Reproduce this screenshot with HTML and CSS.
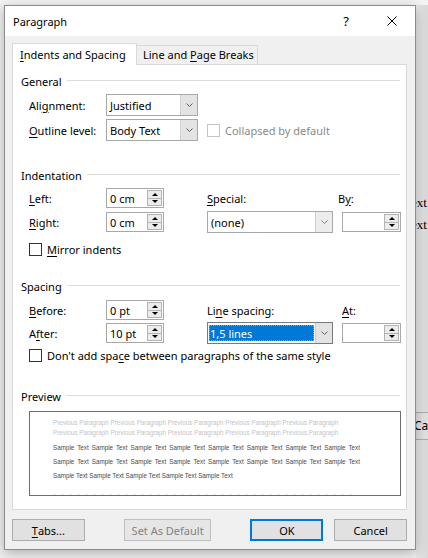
FILE: index.html
```html
<!DOCTYPE html>
<html>
<head>
<meta charset="utf-8">
<title>Paragraph</title>
<link rel="stylesheet" href="styles.css">
</head>
<body>
<div class="desk">
  <div class="doc-frag f1">Text</div>
  <div class="doc-frag f2">Text</div>
  <div class="back-btn">Car</div>
</div>
<div class="dialog">
  <div class="titlebar">
    <span class="title">Paragraph</span>
    <span class="tbtn help">?</span>
    <span class="tbtn close"><svg width="10" height="10" viewBox="0 0 10 10"><path d="M0.5 0.5L9.5 9.5M9.5 0.5L0.5 9.5" stroke="#000" stroke-width="1" fill="none"/></svg></span>
  </div>
  <div class="main">
    <div class="tabs">
      <div class="tab active"><u>I</u>ndents and Spacing</div>
      <div class="tab">Line and <u>P</u>age Breaks</div>
    </div>
    <div class="panel">
      <div class="ghead">General</div>
      <div class="rows">
        <div class="r r-align">
          <span>Ali<u>g</u>nment:</span>
          <div class="combo c92"><span class="v">Justified</span><span class="arr"><svg width="7" height="4" viewBox="0 0 7 4"><path d="M0.5 0.5L3.5 3.5L6.5 0.5" stroke="#606060" fill="none"/></svg></span></div>
        </div>
        <div class="r r-outline">
          <span><u>O</u>utline level:</span>
          <div class="combo c92"><span class="v">Body Text</span><span class="arr"><svg width="7" height="4" viewBox="0 0 7 4"><path d="M0.5 0.5L3.5 3.5L6.5 0.5" stroke="#606060" fill="none"/></svg></span></div>
          <div class="chk dis span2"><span class="cb"></span><span>Collapsed by default</span></div>
        </div>
      </div>

      <div class="ghead g-ind">Indentation</div>
      <div class="rows">
        <div class="r r1 r-left">
          <span><u>L</u>eft:</span>
          <div class="spin"><span class="v">0 cm</span><span class="sb"><span class="up"></span><span class="dn"></span></span></div>
          <span><u>S</u>pecial:</span>
          <span>B<u>y</u>:</span>
        </div>
        <div class="r r2">
          <span><u>R</u>ight:</span>
          <div class="spin"><span class="v">0 cm</span><span class="sb"><span class="up"></span><span class="dn"></span></span></div>
          <div class="combo c126"><span class="v">(none)</span><span class="arr lite"><svg width="7" height="4" viewBox="0 0 7 4"><path d="M0.5 0.5L3.5 3.5L6.5 0.5" stroke="#808080" fill="none"/></svg></span></div>
          <div class="spin s59"><span class="v"></span><span class="sb"><span class="up"></span><span class="dn"></span></span></div>
        </div>
        <div class="r r-chk r-mirror">
          <div class="chk all"><span class="cb"></span><span><u>M</u>irror indents</span></div>
        </div>
      </div>

      <div class="ghead g-sp">Spacing</div>
      <div class="rows">
        <div class="r r1 r-before">
          <span><u>B</u>efore:</span>
          <div class="spin"><span class="v">0 pt</span><span class="sb"><span class="up"></span><span class="dn"></span></span></div>
          <span>Li<u>n</u>e spacing:</span>
          <span class="at"><u>A</u>t:</span>
        </div>
        <div class="r r2 r-after">
          <span>A<u>f</u>ter:</span>
          <div class="spin"><span class="v">10 pt</span><span class="sb"><span class="up"></span><span class="dn"></span></span></div>
          <div class="combo c126 focus"><span class="v"><span class="hl">1,5 lines</span></span><span class="arr"><svg width="7" height="4" viewBox="0 0 7 4"><path d="M0.5 0.5L3.5 3.5L6.5 0.5" stroke="#606060" fill="none"/></svg></span></div>
          <div class="spin s59"><span class="v"></span><span class="sb"><span class="up"></span><span class="dn"></span></span></div>
        </div>
        <div class="r r-chk r-dont">
          <div class="chk all"><span class="cb"></span><span>Don't add spa<u>c</u>e between paragraphs of the same style</span></div>
        </div>
      </div>

      <div class="ghead g-prev">Preview</div>
      <div class="rows">
        <div class="preview">
          <div class="pline">Previous Paragraph Previous Paragraph Previous Paragraph Previous Paragraph Previous Paragraph</div>
          <div class="pline">Previous Paragraph Previous Paragraph Previous Paragraph Previous Paragraph Previous Paragraph</div>
          <div class="sline first">Sample Text Sample Text Sample Text Sample Text Sample Text Sample Text Sample Text Sample Text</div>
          <div class="sline">Sample Text Sample Text Sample Text Sample Text Sample Text Sample Text Sample Text Sample Text</div>
          <div class="sline last">Sample Text Sample Text Sample Text Sample Text Sample Text</div>
          <div class="fline"></div>
        </div>
      </div>
    </div>
    <div class="btns">
      <div class="btn b-tabs"><u>T</u>abs...</div>
      <div class="btn b-def disabled">Set As Default</div>
      <div class="btn b-ok">OK</div>
      <div class="btn b-cancel">Cancel</div>
    </div>
  </div>
</div>
</body>
</html>
```

FILE: styles.css
```css
* { box-sizing: border-box; }
html, body { margin: 0; padding: 0; }
body {
  width: 428px;
  height: 558px;
  overflow: hidden;
  position: relative;
  background: #ececec;
  font-family: "Noto Sans", "Open Sans", sans-serif;
  font-size: 11px;
  color: #000;
}
u { text-decoration: underline; text-underline-offset: 2px; }

/* background window (desktop) */
.desk {
  position: absolute;
  inset: 0;
  background:
    linear-gradient(#f4f4f4, #f4f4f4) 0 0 / 100% 5px no-repeat,
    linear-gradient(to right, #e9e9e9, #d9d9d9) 416px 0 / 12px 100% no-repeat,
    #f0f0f0;
}
.doc-frag {
  position: absolute;
  left: 404px;
  font-family: "Liberation Serif", serif;
  font-size: 13px;
  color: #000;
}
.f1 { top: 195px; }
.f2 { top: 217px; }
.back-btn {
  position: absolute;
  left: 400px;
  top: 412px;
  width: 28px;
  height: 28px;
  border: 1px solid #adadad;
  border-right: none;
  background: #e1e1e1;
  padding-left: 13px;
  line-height: 26px;
  font-size: 12px;
  overflow: hidden;
  white-space: nowrap;
}

/* dialog window */
.dialog {
  position: absolute;
  left: 4px;
  top: 5px;
  width: 412px;
  height: 545px;
  border: 1px solid #8c8c8c;
  background: #f0f0f0;
  box-shadow: 0 3px 12px rgba(0,0,0,0.28);
  display: flex;
  flex-direction: column;
}
.titlebar {
  flex: none;
  height: 30px;
  background: #fff;
  display: flex;
  align-items: center;
  padding-left: 8px;
}
.title { flex: 1; }
.tbtn {
  width: 46px;
  height: 30px;
  display: flex;
  align-items: center;
  justify-content: center;
}
.help { font-size: 13px; }

.main {
  flex: 1;
  padding: 7px 8px 0 7px;
  display: flex;
  flex-direction: column;
}

/* tabs */
.tabs {
  display: flex;
  align-items: flex-end;
  height: 21px;
}
.tab {
  height: 19px;
  border: 1px solid #d9d9d9;
  border-bottom: none;
  background: #f0f0f0;
  padding-left: 6px;
  line-height: 18px;
  width: 122px;
  margin-left: -1px;
}
.tab.active {
  position: relative;
  z-index: 1;
  height: 22px;
  margin-bottom: -1px;
  margin-left: 0;
  width: 125px;
  background: #fff;
  padding-left: 7px;
  line-height: 21px;
}

/* panel */
.panel {
  height: 446px;
  border: 1px solid #d9d9d9;
  background: #fff;
  padding: 8px 6px 0 8px;
}
.ghead {
  display: flex;
  align-items: center;
  height: 16px;
}
.ghead::after {
  content: "";
  flex: 1;
  height: 1px;
  background: #dcdcdc;
  margin-left: 5px;
  margin-top: -1px;
}
.g-ind { margin-top: 26px; }
.g-sp { margin-top: 21px; }
.g-prev { margin-top: 25px; }

.rows { padding-left: 8px; }
.r {
  display: grid;
  grid-template-columns: 77px 101px 131px 62px;
  align-items: center;
}
.r-align { margin-top: 5px; height: 22px; }
.r-outline { margin-top: 3px; height: 22px; }
.r1 { height: 20px; }
.r2 { height: 22px; margin-top: 3px; }
.r-left { margin-top: 5px; }
.r-before { margin-top: 6px; }
.r-after { margin-top: 2px; }
.r-chk { height: 16px; }
.r-mirror { margin-top: 8px; }
.r-dont { margin-top: 3px; }
.at { margin-left: 4px; }

/* combo box */
.combo {
  height: 22px;
  border: 1px solid #a8a8a8;
  background: #fff;
  display: flex;
}
.c92 { width: 92px; }
.c126 { width: 126px; }
.combo .v {
  flex: 1;
  display: flex;
  align-items: center;
  padding-left: 3px;
}
.combo .arr {
  width: 17px;
  background: #e3e3e3;
  border-left: 1px solid #cfcfcf;
  display: flex;
  align-items: center;
  justify-content: center;
}
.combo .arr.lite { background: #ececec; }
.combo.focus { border-color: #7a7a7a; }
.combo.focus .v { padding: 2px 1px 2px 1px; }
.hl {
  display: flex;
  align-items: center;
  width: 100%;
  height: 100%;
  background: #0078d7;
  color: #fff;
  padding-left: 1px;
  outline: 1px dotted #ff8728;
  outline-offset: -1px;
}

/* spin box */
.spin {
  width: 58px;
  height: 20px;
  border: 1px solid #a8a8a8;
  background: #fff;
  display: flex;
  padding: 1px;
}
.spin.s59 { width: 59px; margin-left: 4px; }
.spin .v {
  flex: 1;
  display: flex;
  align-items: center;
  padding-left: 2px;
}
.sb {
  width: 15px;
  display: flex;
  flex-direction: column;
}
.sb span {
  flex: 1;
  border: 1px solid #b4b4b4;
  background: #ececec;
  display: flex;
  align-items: center;
  justify-content: center;
}
.sb .dn { border-top: none; }
.sb .up::before {
  content: "";
  border-left: 3px solid transparent;
  border-right: 3px solid transparent;
  border-bottom: 3px solid #000;
}
.sb .dn::before {
  content: "";
  border-left: 3px solid transparent;
  border-right: 3px solid transparent;
  border-top: 3px solid #000;
}

/* checkbox */
.chk {
  display: flex;
  align-items: center;
  gap: 5px;
}
.chk.all { grid-column: 1 / -1; }
.chk.span2 { grid-column: 3 / span 2; }
.cb {
  width: 13px;
  height: 13px;
  border: 1px solid #333;
  background: #fff;
  flex: none;
}
.chk.dis { color: #8a8a8a; }
.chk.dis .cb { border-color: #c4c4c4; }

/* preview */
.preview {
  margin-top: 7px;
  width: 372px;
  height: 85px;
  border: 1px solid #6e6e6e;
  background: #fff;
  overflow: hidden;
  padding: 6px 0 0 23px;
  font-family: "Liberation Sans", sans-serif;
  font-size: 6.3px;
}
.pline {
  color: #c4c4c4;
  height: 10px;
  line-height: 10px;
  white-space: nowrap;
}
.sline {
  color: #4a4a4a;
  width: 307px;
  height: 14px;
  line-height: 14px;
  white-space: nowrap;
  text-align: justify;
  text-align-last: justify;
}
.sline.first { margin-top: 3px; }
.sline.last { text-align: left; text-align-last: left; }
.fline {
  margin-top: 11px;
  width: 300px;
  height: 1px;
  background: repeating-linear-gradient(to right, #ececec 0 3px, transparent 3px 8px);
}

/* buttons */
.btns {
  display: flex;
  margin-top: 9px;
}
.btn {
  height: 22px;
  width: 73px;
  border: 1px solid #adadad;
  background: #e1e1e1;
  display: flex;
  align-items: center;
  justify-content: center;
}
.b-def { width: 88px; margin-left: 39px; }
.b-ok { margin-left: 39px; border: 2px solid #0078d7; }
.b-cancel { margin-left: 11px; }
.btn.disabled { color: #838383; background: #e6e6e6; border-color: #bfbfbf; }
```
